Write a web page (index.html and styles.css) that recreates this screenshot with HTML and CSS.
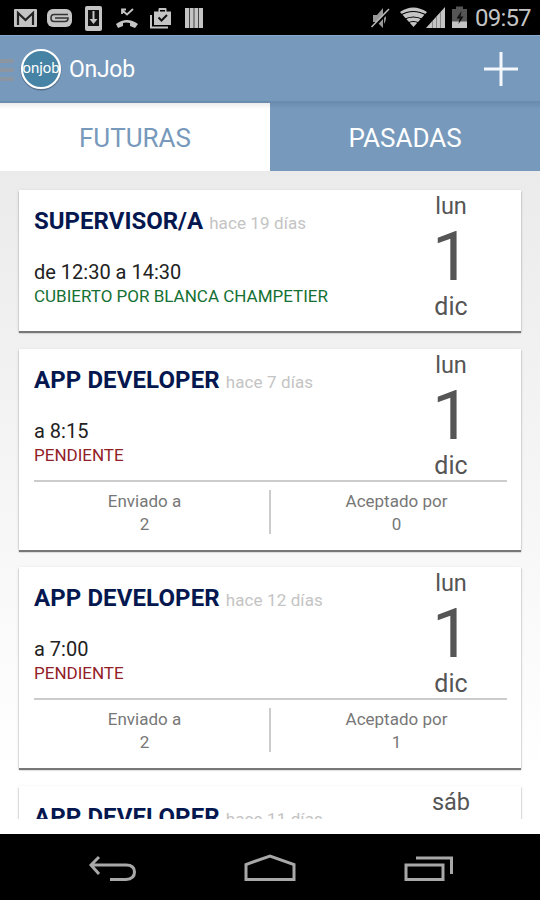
FILE: index.html
```
<!DOCTYPE html>
<html lang="es">
<head>
  <meta charset="UTF-8">
  <title>OnJob</title>
  <link rel="stylesheet" href="styles.css">
</head>
<body>

  <div class="status">
    <svg width="210" height="35" viewBox="0 0 210 35" fill="#c4c4c4">
      <!-- mail -->
      <rect x="14" y="9" width="23" height="18" rx="1"/>
      <path d="M18 25V13l7.500 7 7.500-7v12" fill="none" stroke="#222" stroke-width="2.200"/>
      <!-- message -->
      <rect x="47" y="9" width="25" height="18" rx="6"/>
      <path d="M68 14.500H54q-3 0-3 3.500t3 3.500h11q3 0 3-3.500H55" fill="none" stroke="#333" stroke-width="1.600"/>
      <!-- download -->
      <path d="M87 6h13q2 0 2 2v21q0 2-2 2H87q-2 0-2-2V8q0-2 2-2z"/>
      <path d="M88 10h11v16H88z" fill="#111"/>
      <path d="M92.500 11h2v8h3l-4 5-4-5h3z"/>
      <!-- missed call -->
      <path d="M116 24q11-8 22 0l-3 4-5-2v-3q-4-1-7 0v3l-5 2z"/>
      <path d="M122 14V9.500h4M122 10l5 4.500 6-5.500" fill="none" stroke="#c4c4c4" stroke-width="1.800"/>
      <!-- play store -->
      <path d="M154 11.500h4.500V9q0-1 1-1h6q1 0 1 1v2.500h4.500V25h-17zM160 11.500h5V10h-5z" fill-rule="evenodd"/>
      <path d="M151 15v12.500h17" fill="none" stroke="#c4c4c4" stroke-width="2"/>
      <path d="M158.500 17.500l3 3 5.500-5.500" fill="none" stroke="#111" stroke-width="2"/>
      <!-- barcode -->
      <path d="M185 8h18v20h-18z"/>
      <path d="M189.500 8v20M194 8v20M198.500 8v20" stroke="#444" stroke-width="1"/>
    </svg>
    <svg class="signals" width="100" height="35" viewBox="0 0 100 35" fill="#c4c4c4">
      <!-- muted -->
      <path d="M3 15h4l6-7v20l-6-6H3zM14 12q4 6 0 12z" fill="#999"/>
      <path d="M2.500 28L19.500 10" stroke="#000" stroke-width="3"/>
      <path d="M1.500 27L19 9" stroke="#bbb" stroke-width="1.500"/>
      <!-- wifi -->
      <path d="M30 12q13-9 27 0L43.500 27z"/>
      <path d="M30 15.500q13-8 27 0M34 19.500q9-5 19 0M38 23q5-3 11 0" fill="none" stroke="#000" stroke-width="1.200"/>
      <!-- mobile signal -->
      <path d="M56 28L75 7v21z"/>
      <path d="M62.500 21v7M66.500 17v11M70.500 12v16" stroke="#888" stroke-width="1"/>
      <!-- battery -->
      <path d="M82 9h4V6.500h7V9h4v13H82z" fill="#555"/>
      <path d="M82 21.500h15V28H82z"/>
      <path d="M91.500 11l-5 7.500h3l-1 5.500 5-7.500h-3z" fill="#111"/>
    </svg>
    <span class="clock">09:57</span>
  </div>

  <header class="bar">
    <div class="menu"><i></i><i></i><i></i></div>
    <svg class="logo" width="42" height="44" viewBox="0 0 42 44">
      <circle cx="21" cy="23" r="19.500" fill="none" stroke="#58728e" stroke-width="2"/>
      <circle cx="21" cy="22" r="19" fill="#4783a5" stroke="#fff" stroke-width="2.200"/>
      <text x="2.500" y="26" textLength="37" lengthAdjust="spacingAndGlyphs">onjob</text>
    </svg>
    <h1>OnJob</h1>
    <svg class="add" width="34" height="34" viewBox="0 0 34 34">
      <path d="M17 0v34M0 17h34" stroke="#f4f8fc" stroke-width="3"/>
    </svg>
  </header>

  <nav class="tabs">
    <div class="tab active"><span>FUTURAS</span></div>
    <div class="tab"><span>PASADAS</span></div>
  </nav>

  <main>
    <div class="list">
      <section class="card">
        <div class="top">
          <div class="info">
            <h2>SUPERVISOR/A <small>hace 19 días</small></h2>
            <p class="hour">de 12:30 a 14:30</p>
            <p class="state covered">CUBIERTO POR BLANCA CHAMPETIER</p>
          </div>
          <div class="date"><span>lun</span><b>1</b><span class="month">dic</span></div>
        </div>
      </section>

      <section class="card">
        <div class="top">
          <div class="info">
            <h2 class="app">APP DEVELOPER <small>hace 7 días</small></h2>
            <p class="hour">a 8:15</p>
            <p class="state pending">PENDIENTE</p>
          </div>
          <div class="date"><span>lun</span><b>1</b><span class="month">dic</span></div>
        </div>
        <div class="counts">
          <div>Enviado a<br>2</div>
          <div>Aceptado por<br>0</div>
        </div>
      </section>

      <section class="card">
        <div class="top">
          <div class="info">
            <h2 class="app">APP DEVELOPER <small>hace 12 días</small></h2>
            <p class="hour">a 7:00</p>
            <p class="state pending">PENDIENTE</p>
          </div>
          <div class="date"><span>lun</span><b>1</b><span class="month">dic</span></div>
        </div>
        <div class="counts">
          <div>Enviado a<br>2</div>
          <div>Aceptado por<br>1</div>
        </div>
      </section>

      <section class="card">
        <div class="top">
          <div class="info">
            <h2 class="app">APP DEVELOPER <small>hace 11 días</small></h2>
          </div>
          <div class="date"><span>sáb</span></div>
        </div>
      </section>
    </div>
  </main>

  <footer class="keys">
    <svg width="48" height="28" viewBox="0 0 48 28">
      <path d="M11 3L3 11l8 9M3 11h35q8.500 0 8.500 7t-8.500 7.500H22"/>
    </svg>
    <svg width="52" height="28" viewBox="0 0 52 28">
      <path d="M2 25.500V10.500l24-8.500 24 8.500v15z"/>
    </svg>
    <svg width="50" height="28" viewBox="0 0 50 28">
      <path d="M2 11h37v14.500H2zM12 4h35.500v16"/>
    </svg>
  </footer>

</body>
</html>
```
FILE: styles.css
```
* {
  box-sizing: border-box;
}
body {
  margin: 0;
  width: 540px;
  height: 900px;
  overflow: hidden;
  display: flex;
  flex-direction: column;
  font-family: Roboto, sans-serif;
  background: #fff;
}
h1, h2, p {
  margin: 0;
  white-space: nowrap;
}
.status {
  height: 35px;
  background: #000;
  display: flex;
}
.signals {
  margin-left: 160px;
}
.clock {
  margin-left: 5px;
  font-size: 24px;
  letter-spacing: -0.800px;
  line-height: 37px;
  color: #c4c4c4;
}
.bar {
  height: 68px;
  display: flex;
  align-items: center;
  background: #7799bc;
  border-top: 1px solid #86a9cf;
  border-bottom: 2px solid #6c8cad;
}
.menu {
  width: 14px;
  margin-top: 3px;
  display: flex;
  flex-direction: column;
  gap: 5px;
}
.menu i {
  height: 4px;
  background: #8b96a2;
}
.logo {
  margin-left: 6px;
}
.logo text {
  font-family: Lato, sans-serif;
  font-size: 15px;
  fill: #fff;
}
.bar h1 {
  margin: 2px 0 0 7px;
  font-size: 23px;
  letter-spacing: -0.300px;
  font-weight: 400;
  color: #fff;
}
.add {
  margin-left: auto;
  margin-right: 22px;
}
.tabs {
  height: 68px;
  display: flex;
}
.tab {
  width: 270px;
  padding-top: 2px;
  display: flex;
  align-items: center;
  justify-content: center;
  font-size: 26px;
  color: #fff;
  background: linear-gradient(#6c8eb2, #7799bc 6px);
}
.tab.active {
  color: #7799bc;
  background: linear-gradient(#ececec, #fff 6px);
}
main {
  height: 663px;
  padding-bottom: 15px;
  background: linear-gradient(#ebebeb, #fff 600px);
}
.list {
  height: 648px;
  padding: 19px 19px 0;
  overflow: hidden;
}
.card {
  height: 201px;
  margin-bottom: 17.500px;
  padding: 0 14px 0 15px;
  background: #fff;
  box-shadow: 0 2px 1px #777, 0 1px 3px rgba(0, 0, 0, .15);
}
.card:first-child {
  height: 141px;
}
.top {
  height: 131px;
  display: flex;
  justify-content: space-between;
}
.info {
  padding-top: 16px;
}
h2 {
  font-size: 24px;
  line-height: 30px;
  font-weight: 700;
  color: #05174f;
}
h2.app {
  letter-spacing: 0.100px;
}
h2 small {
  font-size: 17px;
  font-weight: 400;
  letter-spacing: 0.100px;
  color: #c4c4c4;
}
.hour {
  margin-top: 22px;
  font-size: 20px;
  line-height: 24px;
  color: #222;
}
.state {
  font-size: 17px;
  line-height: 25px;
}
.covered {
  color: #147033;
}
.pending {
  color: #922027;
}
.date {
  width: 112px;
  display: flex;
  flex-direction: column;
  align-items: center;
  color: #555;
  font-size: 23.500px;
  line-height: 32px;
}
.date b {
  padding-left: 1px;
  font-size: 69px;
  line-height: 70px;
  font-weight: 400;
}
.date .month {
  font-size: 25px;
  line-height: 29px;
}
.counts {
  display: flex;
  border-top: 2px solid #ccc;
  padding-top: 8px;
}
.counts div {
  flex: 1;
  height: 44px;
  padding-left: 15px;
  text-align: center;
  font-size: 17px;
  line-height: 23px;
  color: #777;
}
.counts div:first-child {
  padding: 0 14px 0 0;
  border-right: 2px solid #ccc;
}
.keys {
  height: 66px;
  padding: 2px 86px 0 88px;
  background: #000;
  display: flex;
  align-items: center;
  justify-content: space-between;
}
.keys svg {
  fill: none;
  stroke: #a8a8a8;
  stroke-width: 3;
}
```
